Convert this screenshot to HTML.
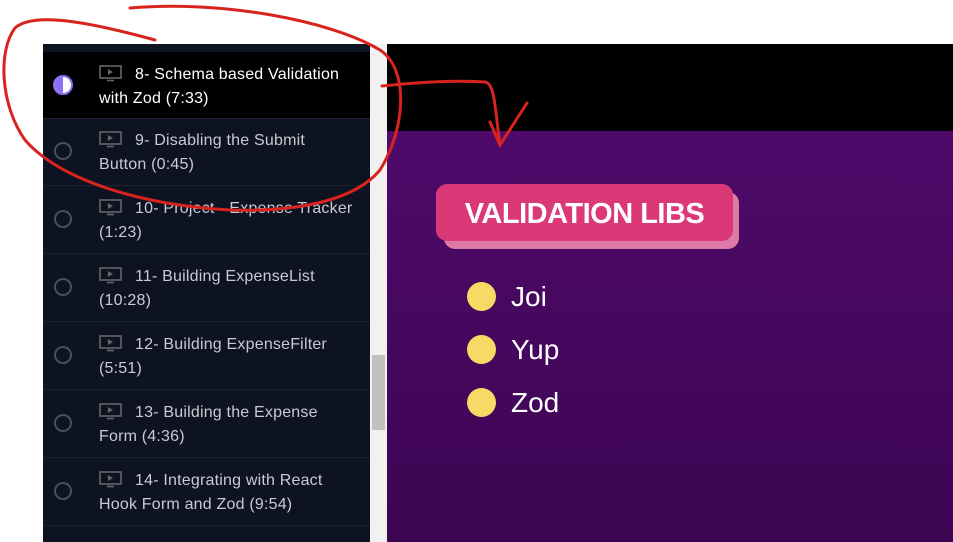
<!DOCTYPE html>
<html><head><style>
body{margin:0;width:953px;height:542px;background:#fff;position:relative;overflow:hidden;font-family:"Liberation Sans",sans-serif}
#side{position:absolute;left:43px;top:44px;width:327px;height:498px;background:#0e1322;overflow:hidden}
.row{position:absolute;left:0;width:327px;height:67px;border-bottom:1px solid #1d2233}
.row .t{position:absolute;left:56px;top:11px;width:258px;font-size:16px;letter-spacing:.2px;line-height:24px;color:#c9cbd2}
.row .c{position:absolute;left:11px;top:24px;width:18px;height:18px;border:2px solid #4a4f5e;border-radius:50%;box-sizing:border-box}
.ic{display:inline-block;width:23px;height:17px;vertical-align:-3px;margin-right:13px}
#sb{position:absolute;left:370px;top:44px;width:17px;height:498px;background:#f1f1f1}
#th{position:absolute;left:372px;top:355px;width:13px;height:75px;background:#c1c1c1}
#vid{position:absolute;left:387px;top:44px;width:566px;height:498px;background:#000}
#pur{position:absolute;left:387px;top:131px;width:566px;height:411px;background:linear-gradient(#4f0a6a,#3c0552)}
#tag2{position:absolute;left:444px;top:192px;width:295px;height:57px;background:#de7aa8;border-radius:11px}
#tag{position:absolute;left:436px;top:184px;width:297px;height:57px;background:#db3878;border-radius:11px;color:#fff;font-weight:bold;font-size:29px;line-height:60px;text-align:center;letter-spacing:-.5px}
.li{position:absolute;left:467px;color:#fff;font-size:28px}
.li i{display:inline-block;width:29px;height:29px;border-radius:50%;background:#f7da66;vertical-align:-5px;margin-right:15px}
</style></head><body>
<div id="side">
<div style="position:absolute;left:0;top:0;width:327px;height:8px;background:#0e1322;border-bottom:1px solid #1d2233"></div>
<div class="row" style="top:8px;background:#000;height:66px"><div class="c" style="left:10px;top:23px;width:20px;height:20px;background:#fff;border:2px solid #8c6ff0"><div style="width:8px;height:16px;background:#8c6ff0;border-radius:8px 0 0 8px"></div></div><div class="t" style="color:#fff"><svg class="ic" viewBox="0 0 23 17"><rect x="1" y="1" width="21" height="12" fill="none" stroke="#666" stroke-width="1.6"/><path d="M9 4l5 3-5 3z" fill="#666"/><path d="M8 15.5h7" stroke="#666" stroke-width="1.6"/></svg>8- Schema based Validation with Zod (7:33)</div></div>
<div class="row" style="top:74px"><div class="c"></div><div class="t"><svg class="ic" viewBox="0 0 23 17"><rect x="1" y="1" width="21" height="12" fill="none" stroke="#666" stroke-width="1.6"/><path d="M9 4l5 3-5 3z" fill="#666"/><path d="M8 15.5h7" stroke="#666" stroke-width="1.6"/></svg>9- Disabling the Submit Button (0:45)</div></div>
<div class="row" style="top:142px"><div class="c"></div><div class="t"><svg class="ic" viewBox="0 0 23 17"><rect x="1" y="1" width="21" height="12" fill="none" stroke="#666" stroke-width="1.6"/><path d="M9 4l5 3-5 3z" fill="#666"/><path d="M8 15.5h7" stroke="#666" stroke-width="1.6"/></svg>10- Project - Expense Tracker (1:23)</div></div>
<div class="row" style="top:210px"><div class="c"></div><div class="t"><svg class="ic" viewBox="0 0 23 17"><rect x="1" y="1" width="21" height="12" fill="none" stroke="#666" stroke-width="1.6"/><path d="M9 4l5 3-5 3z" fill="#666"/><path d="M8 15.5h7" stroke="#666" stroke-width="1.6"/></svg>11- Building ExpenseList (10:28)</div></div>
<div class="row" style="top:278px"><div class="c"></div><div class="t"><svg class="ic" viewBox="0 0 23 17"><rect x="1" y="1" width="21" height="12" fill="none" stroke="#666" stroke-width="1.6"/><path d="M9 4l5 3-5 3z" fill="#666"/><path d="M8 15.5h7" stroke="#666" stroke-width="1.6"/></svg>12- Building ExpenseFilter (5:51)</div></div>
<div class="row" style="top:346px"><div class="c"></div><div class="t"><svg class="ic" viewBox="0 0 23 17"><rect x="1" y="1" width="21" height="12" fill="none" stroke="#666" stroke-width="1.6"/><path d="M9 4l5 3-5 3z" fill="#666"/><path d="M8 15.5h7" stroke="#666" stroke-width="1.6"/></svg>13- Building the Expense Form (4:36)</div></div>
<div class="row" style="top:414px"><div class="c"></div><div class="t"><svg class="ic" viewBox="0 0 23 17"><rect x="1" y="1" width="21" height="12" fill="none" stroke="#666" stroke-width="1.6"/><path d="M9 4l5 3-5 3z" fill="#666"/><path d="M8 15.5h7" stroke="#666" stroke-width="1.6"/></svg>14- Integrating with React Hook Form and Zod (9:54)</div></div>
</div>
<div id="sb"></div><div id="th"></div>
<div id="vid"></div><div id="pur"></div>
<div id="tag2"></div><div id="tag">VALIDATION LIBS</div>
<div class="li" style="top:281px"><i></i>Joi</div>
<div class="li" style="top:334px"><i></i>Yup</div>
<div class="li" style="top:387px"><i></i>Zod</div>
<svg style="position:absolute;left:0;top:0" width="953" height="542"><g fill="none" stroke="#d8231f" stroke-width="3" stroke-linecap="round">
<path d="M130 8C220 0 330 20 380 50C410 70 405 130 380 170C355 200 300 212 230 210C140 205 60 180 25 140C0 105 -2 50 15 28C35 10 100 25 155 40"/>
<path d="M382 86C420 82 460 80 485 82C495 83 495 110 500 145"/>
<path d="M490 122L500 145L527 103"/>
</g></svg>
</body></html>
